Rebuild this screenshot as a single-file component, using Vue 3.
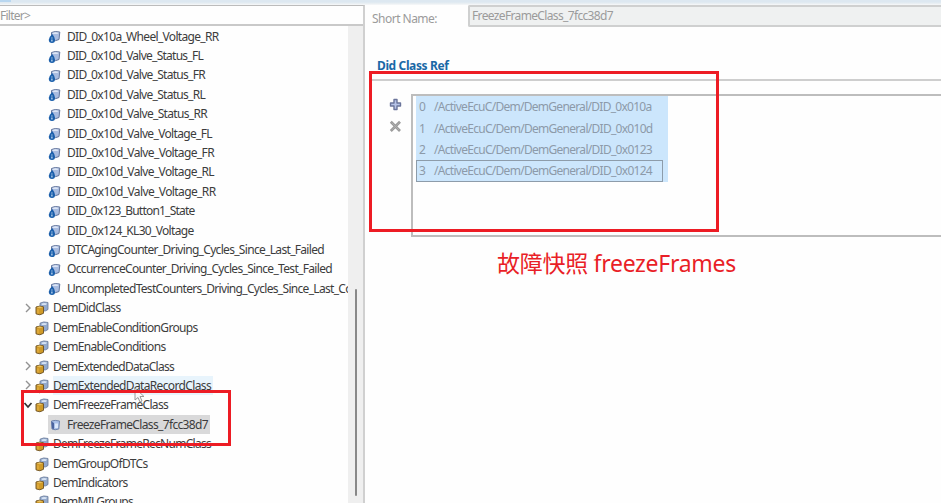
<script setup>
const didRows = [
  ['DID_0x10a_Wheel_Voltage_RR', 151.5],
  ['DID_0x10d_Valve_Status_FL', 136],
  ['DID_0x10d_Valve_Status_FR', 138],
  ['DID_0x10d_Valve_Status_RL', 138],
  ['DID_0x10d_Valve_Status_RR', 140],
  ['DID_0x10d_Valve_Voltage_FL', 145],
  ['DID_0x10d_Valve_Voltage_FR', 147],
  ['DID_0x10d_Valve_Voltage_RL', 147],
  ['DID_0x10d_Valve_Voltage_RR', 148.5],
  ['DID_0x123_Button1_State', 127.5],
  ['DID_0x124_KL30_Voltage', 126.5],
  ['DTCAgingCounter_Driving_Cycles_Since_Last_Failed', 257],
  ['OccurrenceCounter_Driving_Cycles_Since_Test_Failed', 265],
  ['UncompletedTestCounters_Driving_Cycles_Since_Last_Completed', 327],
].map(([label, width]) => ({ label, width, kind: 'did' }))

const groupRows = [
  ['DemDidClass', 67.5, 'closed'],
  ['DemEnableConditionGroups', 144.5],
  ['DemEnableConditions', 112.5],
  ['DemExtendedDataClass', 121, 'closed'],
  ['DemExtendedDataRecordClass', 158, 'closed', 'hovered'],
  ['DemFreezeFrameClass', 115, 'open'],
].map(([label, width, arrow, state]) => ({ label, width, arrow, state, kind: 'group' }))

const tailRows = [
  ['DemFreezeFrameRecNumClass', 158],
  ['DemGroupOfDTCs', 94.5],
  ['DemIndicators', 74.5],
  ['DemMILGroups', 80],
].map(([label, width]) => ({ label, width, kind: 'group' }))

const rows = [
  ...didRows,
  ...groupRows,
  { label: 'FreezeFrameClass_7fcc38d7', width: 141, kind: 'leaf', state: 'selected' },
  ...tailRows,
]

const refs = [
  ['/ActiveEcuC/Dem/DemGeneral/DID_0x010a', 217.5],
  ['/ActiveEcuC/Dem/DemGeneral/DID_0x010d', 218.5],
  ['/ActiveEcuC/Dem/DemGeneral/DID_0x0123', 218],
  ['/ActiveEcuC/Dem/DemGeneral/DID_0x0124', 218],
]

const vFit = {
  mounted(el, { value }) {
    const natural = el.getBoundingClientRect().width
    el.style.letterSpacing = `${(value - natural) / el.textContent.length}px`
  },
}
</script>

<template>
  <div class="window">
    <div class="topbar"><i></i></div>
    <div class="body">
      <aside class="side">
        <div class="filter"><span v-fit="30">Filter&gt;</span></div>
        <div class="tree-area">
          <div class="tree">
            <div v-for="row in rows" :key="row.label" class="row" :class="[row.kind, row.state]">
              <span v-if="row.kind === 'group'" class="arrow">
                <svg v-if="row.arrow === 'closed'" width="10" height="12" viewBox="0 0 10 12"><path d="M3 2l4 4-4 4" fill="none" stroke="#929292" stroke-width="1.4" /></svg>
                <svg v-if="row.arrow === 'open'" width="10" height="12" viewBox="0 0 10 12"><path d="M1.500 4l3.500 4 3.500-4" fill="none" stroke="#333" stroke-width="1.7" /></svg>
              </span>
              <svg v-if="row.kind === 'group'" class="icon" width="14" height="15" viewBox="0 0 14 15">
                <path d="M5 2.2Q8.500 0 13 1.500V8.500Q11 10.500 7 10H5Z" fill="#93a9cc" stroke="#6a7b9b" stroke-width=".8" />
                <path d="M6.300 2.700Q9 1.500 12 2.400L11 4H7Z" fill="#d5e1f2" />
                <path d="M1 6Q4.500 4.500 8.500 5.800V12.300Q5 15 1 12.800Z" fill="#cf9a27" stroke="#75592a" stroke-width="1" />
                <path d="M1.700 6.200Q5 5 8 6.300Q5 8 1.700 6.200Z" fill="#e8c164" />
                <path d="M3 8.300V12.500" stroke="#e2ac40" stroke-width="1.500" />
              </svg>
              <svg v-else-if="row.kind === 'did'" class="icon" width="13" height="14" viewBox="0 0 13 14">
                <path d="M3.500 2.500Q7 .8 11.800 2L11 9.500Q8 11.500 3.500 10Z" fill="#a9bce0" stroke="#64769c" stroke-width="1" />
                <path d="M4.300 3Q7 1.800 10.700 2.700L9.500 4H5Z" fill="#dce5f5" />
                <path d="M4.300 4Q1 7 .8 9.800Q.8 13 4 13T7 9.800Q6.800 7 4.300 4Z" fill="#1b5fab" />
                <path d="M3.900 7.500v1M3.900 9.500v2" stroke="#c9e1f8" stroke-width="1.200" />
              </svg>
              <svg v-else class="icon" width="13" height="14" viewBox="0 0 13 14">
                <path d="M3.500 3Q7 1.800 11.500 3L10.800 11Q7 12.500 4 11Z" fill="#a9c0e8" stroke="#6f84ab" stroke-width="1" />
                <path d="M3.500 3.500L6 5V11L4 10.500Z" fill="#4a64a0" />
                <path d="M7 5.500h3v4.500H7Z" fill="#dce9fb" />
              </svg>
              <span class="label"><span v-fit="row.width">{{ row.label }}</span></span>
            </div>
          </div>
          <div class="track"><div class="thumb"></div></div>
        </div>
      </aside>
      <main class="detail">
        <div class="field">
          <label><span v-fit="65">Short Name:</span></label>
          <div class="input"><span v-fit="141">FreezeFrameClass_7fcc38d7</span></div>
        </div>
        <h2><span v-fit="71.5">Did Class Ref</span></h2>
        <div class="section">
          <div class="tools">
            <svg width="13" height="13" viewBox="0 0 13 13"><path d="M5 1.500h3V5h3.500v3H8v3.500H5V8H1.500V5H5Z" fill="#b7c4e8" stroke="#6b759b" stroke-width="1.400" stroke-linejoin="round" /></svg>
            <svg width="13" height="13" viewBox="0 0 13 13"><path d="M1.800 1.800L11 11M11 1.800L1.800 11" stroke="#999" stroke-width="2.700" /><path d="M2.500 2.500L10.300 10.300M10.300 2.500L2.500 10.300" stroke="#b4b4b4" stroke-width=".8" /></svg>
          </div>
          <div class="list">
            <div class="selection">
              <div v-for="(item, i) in refs" :key="i" class="ref" :class="{ focused: i === 3 }">
                <span class="index">{{ i }}</span><span v-fit="item[1]">{{ item[0] }}</span>
              </div>
            </div>
          </div>
        </div>
        <p class="caption"><span v-fit="239">故障快照 freezeFrames</span></p>
      </main>
    </div>
    <svg class="cursor" width="12" height="17" viewBox="0 0 12 17"><path d="M1 1V13L4 10.500L6 15L8 14L6 9.500H10Z" fill="#f8f8f8" stroke="#9a9a9a" stroke-width="1" /></svg>
    <div class="mark mark-tree"></div>
    <div class="mark mark-list"></div>
  </div>
</template>

<style>
body { margin: 0; overflow: hidden; }
</style>

<style scoped>
* { box-sizing: border-box; }
.window {
  position: relative;
  display: flex;
  flex-direction: column;
  width: 941px;
  height: 503px;
  overflow: hidden;
  background: #fefefe;
  font-family: "Noto Sans", "Open Sans", "Noto Sans CJK SC", sans-serif;
  font-size: 12px;
  color: #3c3c3c;
  white-space: pre;
}
.topbar { flex: none; height: 5px; background: linear-gradient(#dde8f1 0 2px, #edf1f4 4px, #f8f9fa); }
.topbar i { display: block; width: 11px; height: 2px; background: #b9d7f0; }
.body { display: flex; flex: 1; min-height: 0; }
.side { display: flex; flex-direction: column; width: 365px; border-top: 1px solid #bcbcbc; border-right: 2px solid #d0d0d0; }
.filter { flex: none; height: 20px; border-bottom: 2px solid #c9c9c9; line-height: 20px; color: #999; }
.tree-area { display: flex; flex: 1; min-height: 0; }
.tree { width: 348px; padding-top: 0.4px; overflow: hidden; }
.row { display: flex; align-items: center; height: 19.42px; padding-left: 48px; }
.row.group { padding-left: 23px; }
.arrow { display: flex; width: 12px; }
.icon { flex: none; position: relative; top: 1px; }
.row.did .label, .row.leaf .label { margin-left: 6px; }
.row.group .label { margin-left: 4px; }
.label { line-height: 19px; }
.row.hovered .label { background: #e8f4fc; padding-right: 2px; }
.row.selected { width: 210px; background: linear-gradient(90deg, transparent 48px, #d9d9da 48px); }
.track { display: flex; justify-content: center; flex: 1; padding-top: 263px; background: #efefef; }
.thumb { width: 2px; height: 207px; border-radius: 1px; background: #888; }
.detail { display: flex; flex-direction: column; flex: 1; min-width: 0; }
.field { display: flex; align-items: center; height: 22px; padding-left: 7px; color: #9b9b9b; }
label { width: 96px; padding-top: 5px; }
.input { flex: 1; height: 22px; border: 2px solid #cfd0d0; border-right: 0; border-radius: 2px 0 0 2px; background: #eff1f1; padding-left: 2px; line-height: 18px; }
h2 { margin: 30px 0 0 12px; height: 22px; font-size: 12px; line-height: 18px; font-weight: 700; color: #1a68a6; }
.section { display: flex; height: 158px; margin-left: 6px; border-top: 2px solid #cecece; }
.tools { display: flex; flex-direction: column; gap: 9px; width: 40px; padding: 17px 0 0 18px; }
.list { flex: 1; height: 143px; margin-top: 13px; padding: 0 0 0 3px; border: 2px solid #bdbdbd; border-right: 0; }
.selection { width: 252px; background: #cce6fc; color: #8c9aa9; }
.ref { display: flex; align-items: center; width: 247px; height: 21.4px; padding-left: 2px; border: 1px solid transparent; line-height: 19px; }
.ref.focused { border-color: #8d9caa; }
.index { width: 15px; }
.caption { margin: 8px 0 0 132px; font-family: "Noto Sans", "Noto Sans CJK SC", sans-serif; font-size: 23px; line-height: 36px; color: #e91f27; }
.cursor { position: absolute; left: 134px; top: 387px; }
.mark { position: absolute; border: 3px solid #ed1c24; }
.mark-tree { left: 21px; top: 390px; width: 210px; height: 56px; }
.mark-list { left: 369px; top: 71px; width: 350px; height: 161px; }
</style>
